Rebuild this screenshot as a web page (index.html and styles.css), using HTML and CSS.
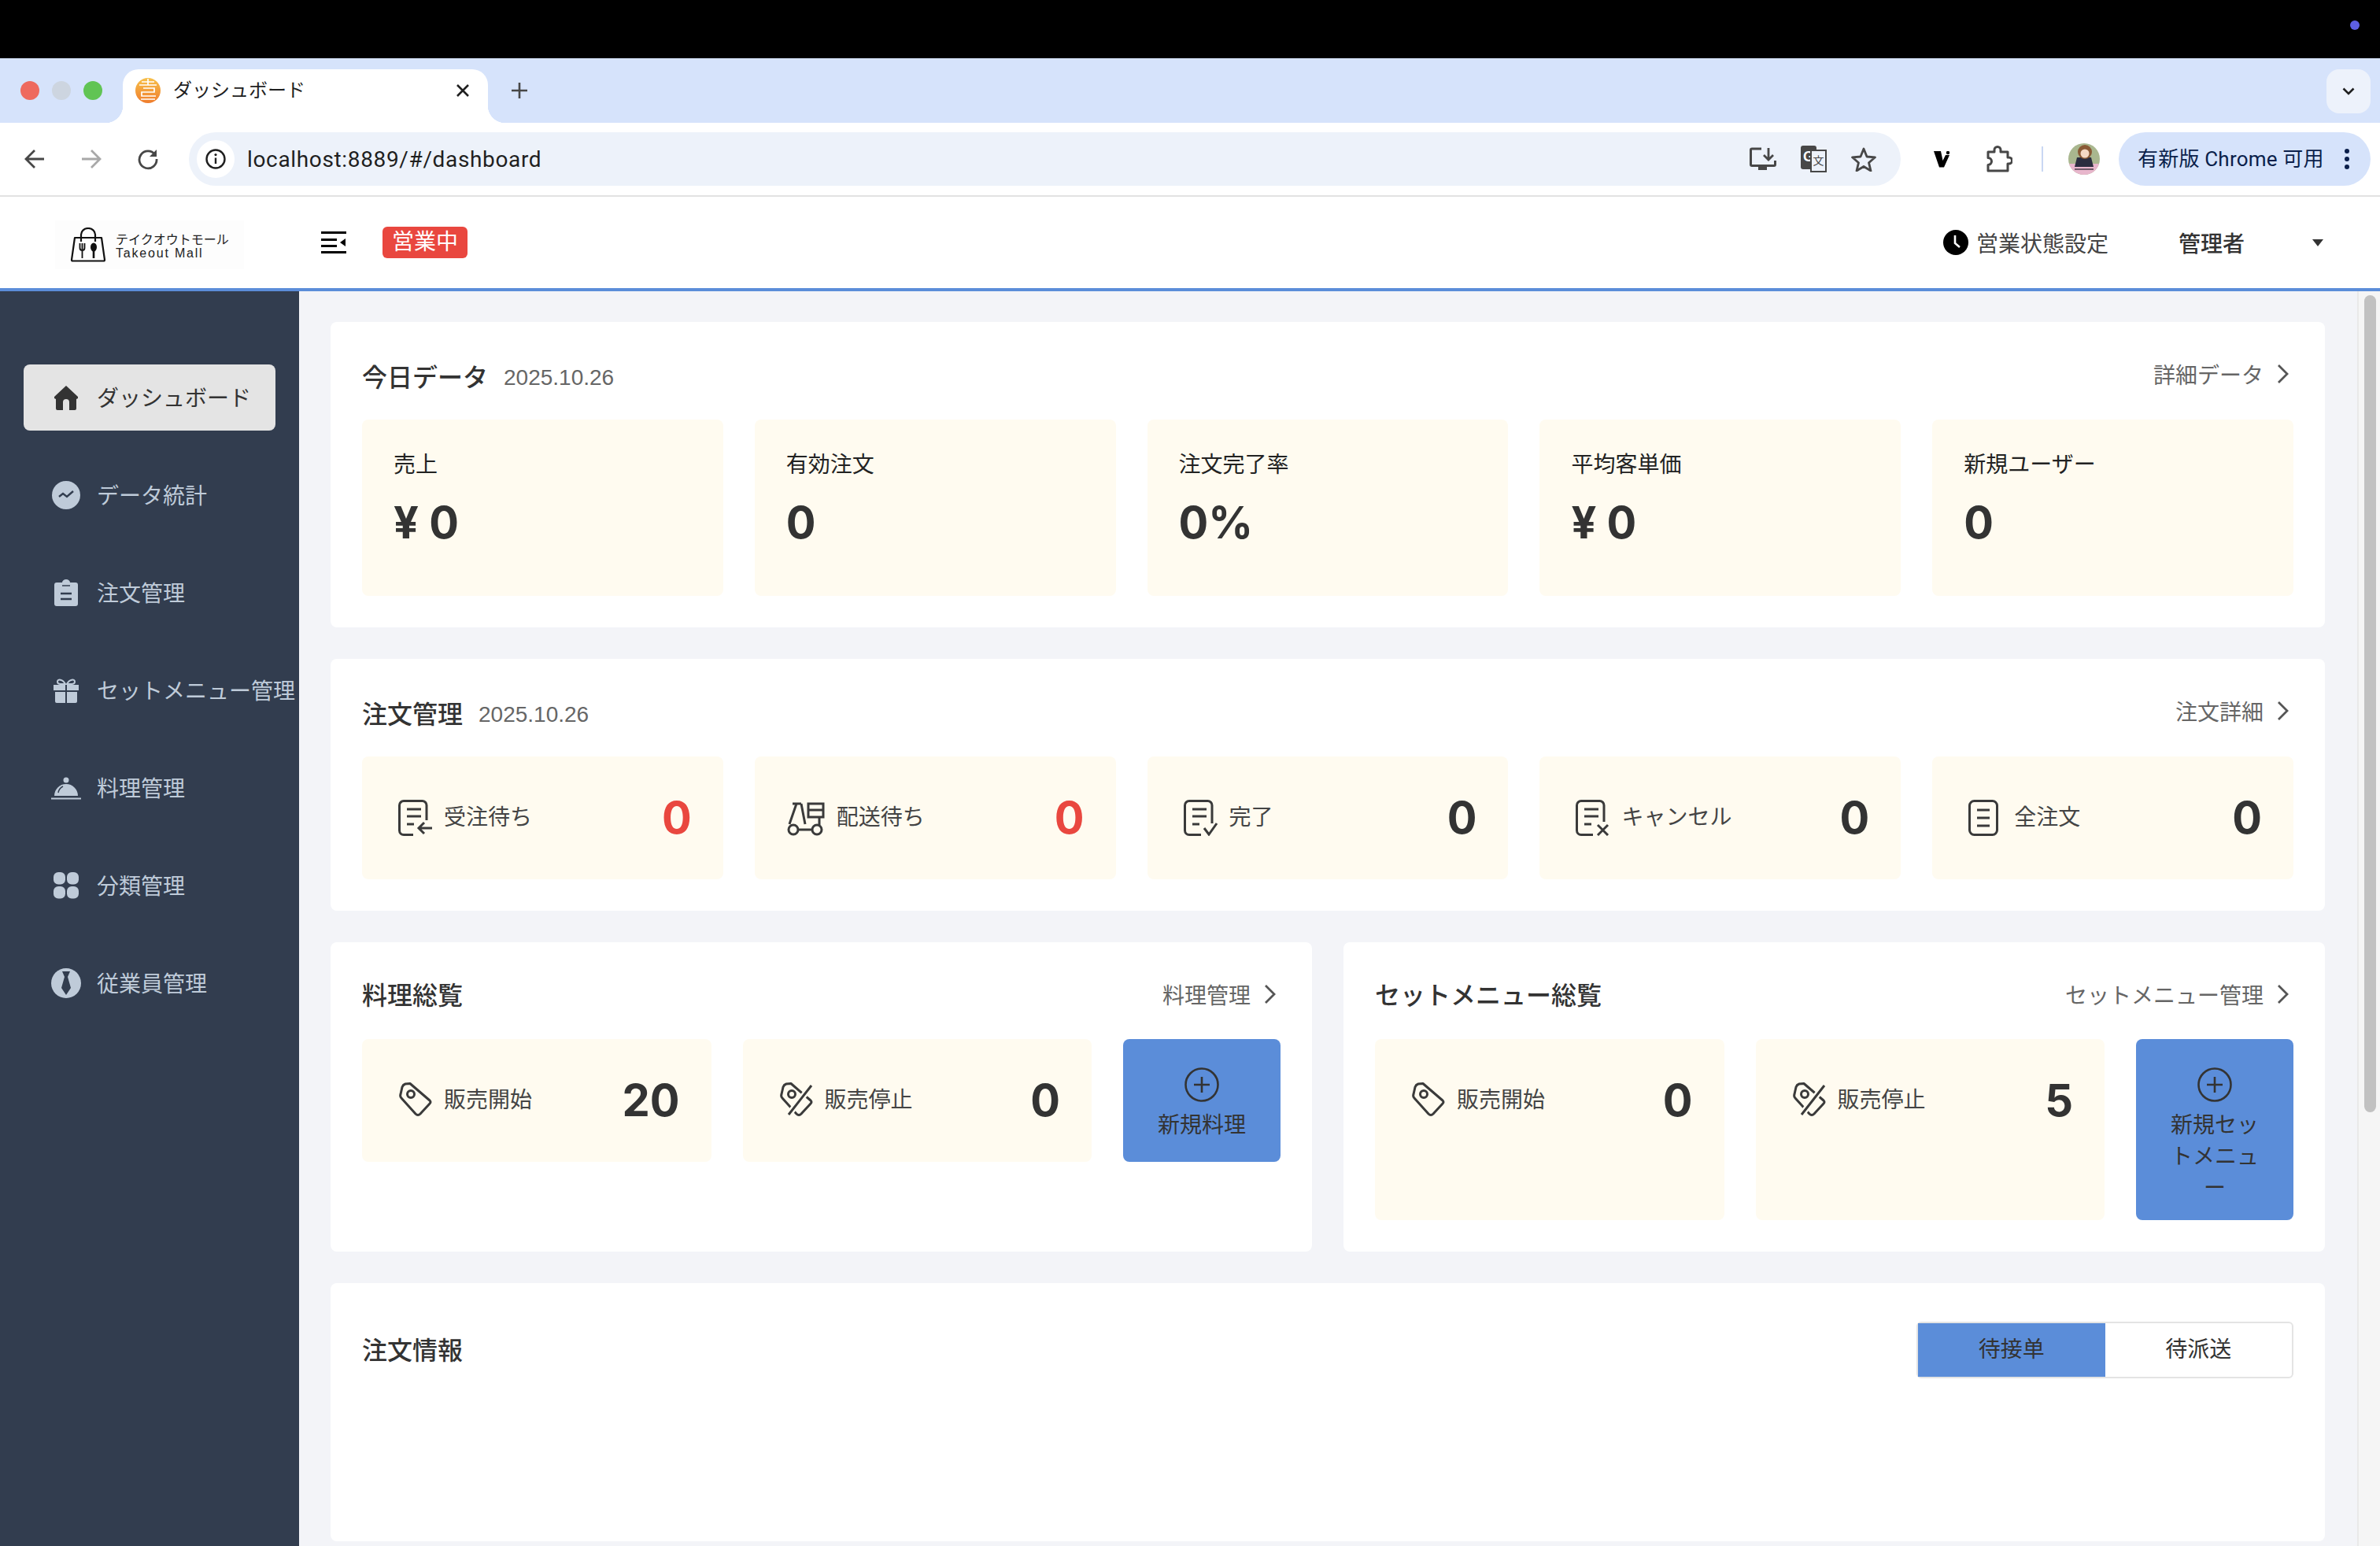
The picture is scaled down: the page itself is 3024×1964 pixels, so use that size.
FILE: index.html
```html
<!DOCTYPE html>
<html lang="ja">
<head>
<meta charset="utf-8">
<title>ダッシュボード</title>
<link rel="stylesheet" href="styles.css">
</head>
<body>

<!-- mac menu bar -->
<div class="menubar"><span class="menubar-dot"></span></div>

<!-- browser tabs -->
<div class="tabstrip">
  <div class="lights">
    <span class="light light-red"></span>
    <span class="light light-grey"></span>
    <span class="light light-green"></span>
  </div>
  <div class="tab">
    <svg class="favicon" width="32" height="32" viewBox="0 0 32 32">
      <defs><linearGradient id="fav" x1="0" y1="0" x2="0" y2="1"><stop offset="0" stop-color="#f7c04a"/><stop offset="1" stop-color="#ef7d2d"/></linearGradient></defs>
      <circle cx="16" cy="16" r="16" fill="url(#fav)"/>
      <path d="M8 5h16M5 9h22M16 1v8M10 13h14v5H8v5h18M7 27h18" fill="none" stroke="#fff" stroke-width="1.700"/>
    </svg>
    <span class="tab-title">ダッシュボード</span>
    <svg class="tab-close" width="16" height="16" viewBox="0 0 16 16"><path d="M1 1l14 14M15 1L1 15" stroke="#1f1f1f" stroke-width="2.6" fill="none"/></svg>
  </div>
  <svg class="tab-new" width="22" height="22" viewBox="0 0 22 22"><path d="M11 1v20M1 11h20" stroke="#474747" stroke-width="2.6" fill="none"/></svg>
  <div class="tab-menu">
    <svg width="16" height="10" viewBox="0 0 16 10"><path d="M1.5 1.5L8 8l6.5-6.5" stroke="#1f1f1f" stroke-width="2.6" fill="none"/></svg>
  </div>
</div>

<!-- browser toolbar -->
<div class="toolbar">
  <div class="nav-btn"><svg width="28" height="28" viewBox="0 0 28 28"><path d="M26 14H3M14 3L3 14l11 11" fill="none" stroke="#474747" stroke-width="2.8"/></svg></div>
  <div class="nav-btn"><svg width="28" height="28" viewBox="0 0 28 28"><path d="M2 14h23M14 3l11 11-11 11" fill="none" stroke="#a8a8a8" stroke-width="2.8"/></svg></div>
  <div class="nav-btn"><svg width="28" height="28" viewBox="0 0 28 28"><path d="M23 8.5A11 11 0 1 0 25 14" fill="none" stroke="#474747" stroke-width="2.8"/><path d="M25 2v9h-9z" fill="#474747"/></svg></div>

  <div class="omnibox">
    <div class="site-info">
      <svg width="26" height="26" viewBox="0 0 26 26"><circle cx="13" cy="13" r="11.5" fill="none" stroke="#1f1f1f" stroke-width="2.4"/><path d="M13 11.5V19" stroke="#1f1f1f" stroke-width="2.4"/><circle cx="13" cy="7.6" r="1.6" fill="#1f1f1f"/></svg>
    </div>
    <span class="url">localhost:8889/#/dashboard</span>
    <div class="omni-icons">
      <div class="omni-icon"><svg width="34" height="30" viewBox="0 0 34 30"><path d="M15 2H3a1.500 1.500 0 0 0-1.500 1.500V22A1.500 1.500 0 0 0 3 23.500h28a1.500 1.500 0 0 0 1.500-1.500V17" fill="none" stroke="#474747" stroke-width="3"/><path d="M11 24h11v5H11z" fill="#474747"/><path d="M24 1v14M18 10l6 6 6-6" fill="none" stroke="#474747" stroke-width="2.8"/></svg></div>
      <div class="omni-icon translate">
        <span class="translate-g">G</span>
        <span class="translate-x">文</span>
      </div>
      <div class="omni-icon"><svg width="34" height="32" viewBox="0 0 34 32"><path d="M17 3l4 10 10.500.8-8 6.900 2.500 10.300L17 25.500 8 31l2.500-10.300-8-6.900L13 13z" fill="none" stroke="#474747" stroke-width="2.8" stroke-linejoin="round"/></svg></div>
    </div>
  </div>

  <div class="ext-btn"><svg width="22" height="21" viewBox="0 0 22 21"><path d="M0 0h9l2.500 12L15 5h5l-7 15.500H7z" fill="#000"/><circle cx="18" cy="2" r="2.200" fill="#000"/></svg></div>
  <div class="ext-btn"><svg width="34" height="34" viewBox="0 0 34 34"><path d="M3 8h8V5.500a4 4 0 0 1 8 0V8h9v7h1.500a4 4 0 0 1 0 8H28v9H3v-7.500a4 4 0 0 0 0-9z" fill="none" stroke="#474747" stroke-width="3" stroke-linejoin="round"/></svg></div>
  <span class="tool-divider"></span>
  <svg class="avatar" width="40" height="40" viewBox="0 0 40 40">
    <defs><clipPath id="av"><circle cx="20" cy="20" r="20"/></clipPath></defs>
    <g clip-path="url(#av)">
      <rect width="40" height="40" fill="#a9b78f"/>
      <rect y="26" width="40" height="14" fill="#e8b6cc"/>
      <path d="M11 18h18l3 12H8z" fill="#2b2d3f"/>
      <circle cx="21" cy="11" r="9" fill="#8a5a36"/>
      <circle cx="21" cy="13" r="5.500" fill="#f4d8c4"/>
      <path d="M8 33h24" stroke="#4a3a48" stroke-width="1.500"/>
    </g>
  </svg>
  <div class="update-pill">
    <span class="update-text">有新版 Chrome 可用</span>
    <svg width="8" height="28" viewBox="0 0 8 28"><circle cx="4" cy="4" r="3" fill="#0b1f4b"/><circle cx="4" cy="14" r="3" fill="#0b1f4b"/><circle cx="4" cy="24" r="3" fill="#0b1f4b"/></svg>
  </div>
</div>

<!-- app header -->
<header class="app-header">
  <div class="logo">
    <svg width="46" height="44" viewBox="0 0 46 44">
      <path d="M6 13h34l4 28a1.500 1.500 0 0 1-1.500 1.500H3.500A1.500 1.500 0 0 1 2 41z" fill="none" stroke="#111" stroke-width="2.200" stroke-linejoin="round"/>
      <path d="M14 18V9a9 8 0 0 1 18 0v9" fill="none" stroke="#111" stroke-width="2.200"/>
      <path d="M12.500 20v6a3 3 0 0 0 6 0v-6M15.500 20v19" fill="none" stroke="#111" stroke-width="1.800"/>
      <ellipse cx="30" cy="25" rx="4" ry="5.500" fill="#111"/>
      <path d="M30 28v11" stroke="#111" stroke-width="2.600"/>
    </svg>
    <div class="logo-text">
      <span>テイクオウトモール</span>
      <span class="logo-en">Takeout Mall</span>
    </div>
  </div>
  <svg class="collapse" width="32" height="28" viewBox="0 0 32 28">
    <path d="M0 1.500h32M0 26.500h32M0 10.500h20M0 18.500h20" stroke="#000" stroke-width="3" fill="none"/>
    <path d="M31 9v10l-7-5z" fill="#000"/>
  </svg>
  <span class="status-badge">営業中</span>
  <div class="header-right">
    <svg width="32" height="32" viewBox="0 0 32 32"><circle cx="16" cy="16" r="16" fill="#000"/><path d="M15 7v10l6 5" fill="none" stroke="#fff" stroke-width="2.600"/></svg>
    <span class="status-set">営業状態設定</span>
    <span class="admin-name">管理者</span>
    <span class="admin-caret"></span>
  </div>
</header>

<div class="layout">
  <nav class="sidebar">
    <a class="side-item active">
      <span class="side-icon"><svg width="32" height="32" viewBox="0 0 32 32"><path d="M16 1L1 15v2l2 1v12a2 2 0 0 0 2 2h7V22a4 4 0 0 1 8 0v10h7a2 2 0 0 0 2-2V18l2-1v-2z" fill="#333"/></svg></span>
      <span class="side-label">ダッシュボード</span>
    </a>
    <a class="side-item">
      <span class="side-icon"><svg width="36" height="36" viewBox="0 0 36 36"><circle cx="18" cy="18" r="18" fill="#bfcbd9"/><path d="M9 20l5-4 5 4 8-7" fill="none" stroke="#323d4f" stroke-width="2.400"/></svg></span>
      <span class="side-label">データ統計</span>
    </a>
    <a class="side-item">
      <span class="side-icon"><svg width="30" height="34" viewBox="0 0 30 34"><path d="M3 4h7a5 4 0 0 1 10 0h7a3 3 0 0 1 3 3v24a3 3 0 0 1-3 3H3a3 3 0 0 1-3-3V7a3 3 0 0 1 3-3z" fill="#bfcbd9"/><path d="M8 18h14M8 25h14" stroke="#323d4f" stroke-width="2.400"/><path d="M10 8h10" stroke="#323d4f" stroke-width="1.500"/></svg></span>
      <span class="side-label">注文管理</span>
    </a>
    <a class="side-item">
      <span class="side-icon"><svg width="32" height="32" viewBox="0 0 32 32"><path d="M0 9h15v7H0zM17 9h15v7H17zM2 18h13v14H4a2 2 0 0 1-2-2zM17 18h13v12a2 2 0 0 1-2 2H17z" fill="#bfcbd9"/><path d="M15 8c-3-6-10-7-10-3s5 3 10 3zM17 8c3-6 10-7 10-3s-5 3-10 3z" fill="none" stroke="#bfcbd9" stroke-width="2"/></svg></span>
      <span class="side-label">セットメニュー管理</span>
    </a>
    <a class="side-item">
      <span class="side-icon"><svg width="38" height="30" viewBox="0 0 38 30"><path d="M4 25a15 15 0 0 1 30 0z" fill="#bfcbd9"/><circle cx="19" cy="5" r="3.500" fill="#bfcbd9"/><path d="M0 28.500h38" stroke="#bfcbd9" stroke-width="2"/><path d="M9 21a11 11 0 0 1 6-8" fill="none" stroke="#323d4f" stroke-width="1.500"/></svg></span>
      <span class="side-label">料理管理</span>
    </a>
    <a class="side-item">
      <span class="side-icon"><svg width="32" height="34" viewBox="0 0 32 34"><rect width="15" height="15.500" rx="6" fill="#bfcbd9"/><rect x="17" width="15" height="15.500" rx="6" fill="#bfcbd9"/><rect y="18" width="15" height="15.500" rx="6" fill="#bfcbd9"/><rect x="17" y="18" width="15" height="15.500" rx="6" fill="#bfcbd9"/></svg></span>
      <span class="side-label">分類管理</span>
    </a>
    <a class="side-item">
      <span class="side-icon"><svg width="38" height="38" viewBox="0 0 38 38"><circle cx="19" cy="19" r="19" fill="#bfcbd9"/><path d="M14 4h10l-3 7 4 14-6 9-6-9 4-14z" fill="#323d4f"/></svg></span>
      <span class="side-label">従業員管理</span>
    </a>
  </nav>

  <main class="content">
    <section class="card">
      <div class="card-head dated">
        <h2 class="card-title">今日データ</h2>
        <span class="card-date">2025.10.26</span>
        <a class="card-link">詳細データ
          <svg width="14" height="26" viewBox="0 0 14 26"><path d="M1 2l11 11L1 24" fill="none" stroke="#555" stroke-width="2.800"/></svg>
        </a>
      </div>
      <div class="stat-row">
        <div class="stat-box stacked"><span class="stat-name">売上</span><b class="stat-value">¥ 0</b></div>
        <div class="stat-box stacked"><span class="stat-name">有効注文</span><b class="stat-value">0</b></div>
        <div class="stat-box stacked"><span class="stat-name">注文完了率</span><b class="stat-value">0%</b></div>
        <div class="stat-box stacked"><span class="stat-name">平均客単価</span><b class="stat-value">¥ 0</b></div>
        <div class="stat-box stacked"><span class="stat-name">新規ユーザー</span><b class="stat-value">0</b></div>
      </div>
    </section>

    <section class="card">
      <div class="card-head dated">
        <h2 class="card-title">注文管理</h2>
        <span class="card-date">2025.10.26</span>
        <a class="card-link">注文詳細
          <svg width="14" height="26" viewBox="0 0 14 26"><path d="M1 2l11 11L1 24" fill="none" stroke="#555" stroke-width="2.800"/></svg>
        </a>
      </div>
      <div class="stat-row">
        <div class="stat-box">
          <svg class="stat-icon" width="50" height="46" viewBox="-6 0 50 46"><path d="M36 26V7a5.500 5.500 0 0 0-5.500-5.500H7A5.500 5.500 0 0 0 1.500 7v32A5.500 5.500 0 0 0 7 44.500h12M11 12h18M11 21h18M11 31h9M43 36H26M33 29l-7 7 7 7" fill="none" stroke="#3a3a3a" stroke-width="3"/></svg>
          <span class="stat-label">受注待ち</span><b class="stat-value red">0</b>
        </div>
        <div class="stat-box">
          <svg class="stat-icon" width="50" height="46" viewBox="0 0 50 46"><path d="M8 5h11M13 5L4 31M19 5l5 26M14 38h20M42 23v9" fill="none" stroke="#3a3a3a" stroke-width="3"/><path d="M28 5h19v8H28zM28 13h19v9H28z" fill="none" stroke="#3a3a3a" stroke-width="3"/><circle cx="9" cy="38" r="6" fill="none" stroke="#3a3a3a" stroke-width="3"/><circle cx="39" cy="38" r="6" fill="none" stroke="#3a3a3a" stroke-width="3"/></svg>
          <span class="stat-label">配送待ち</span><b class="stat-value red">0</b>
        </div>
        <div class="stat-box">
          <svg class="stat-icon" width="50" height="46" viewBox="-6 0 50 46"><path d="M36 30V7a5.500 5.500 0 0 0-5.500-5.500H7A5.500 5.500 0 0 0 1.500 7v32A5.500 5.500 0 0 0 7 44.500h15M11 12h18M11 21h18M11 31h9M26 36l6 8 10-14" fill="none" stroke="#3a3a3a" stroke-width="3"/></svg>
          <span class="stat-label">完了</span><b class="stat-value">0</b>
        </div>
        <div class="stat-box">
          <svg class="stat-icon" width="50" height="46" viewBox="-6 0 50 46"><path d="M36 28V7a5.500 5.500 0 0 0-5.500-5.500H7A5.500 5.500 0 0 0 1.500 7v32A5.500 5.500 0 0 0 7 44.500h15M11 12h18M11 21h18M11 31h9M28 32l13 13M41 32L28 45" fill="none" stroke="#3a3a3a" stroke-width="3"/></svg>
          <span class="stat-label">キャンセル</span><b class="stat-value">0</b>
        </div>
        <div class="stat-box">
          <svg class="stat-icon" width="50" height="46" viewBox="-6 0 50 46"><rect x="1.500" y="1.500" width="35" height="43" rx="6" fill="none" stroke="#3a3a3a" stroke-width="3"/><path d="M11 13h16M11 23h16M11 33h16" stroke="#3a3a3a" stroke-width="3"/></svg>
          <span class="stat-label">全注文</span><b class="stat-value">0</b>
        </div>
      </div>
    </section>

    <div class="card-pair">
      <section class="card">
        <div class="card-head">
          <h2 class="card-title">料理総覧</h2>
          <a class="card-link">料理管理
            <svg width="14" height="26" viewBox="0 0 14 26"><path d="M1 2l11 11L1 24" fill="none" stroke="#555" stroke-width="2.800"/></svg>
          </a>
        </div>
        <div class="stat-row">
          <div class="stat-box">
            <svg class="stat-icon" width="50" height="44" viewBox="-7 0 50 44"><path d="M14 1.500L39 23q2 2 0 4L27 40q-3 3-6 0L3 20q-2-2-1-5L4 6q1-3 4-4z" fill="none" stroke="#3a3a3a" stroke-width="3" stroke-linejoin="round"/><circle cx="15" cy="15" r="4.500" fill="none" stroke="#3a3a3a" stroke-width="3"/></svg>
            <span class="stat-label">販売開始</span><b class="stat-value">20</b>
          </div>
          <div class="stat-box">
            <svg class="stat-icon" width="50" height="44" viewBox="-7 0 50 44"><path d="M14 1.500L39 23q2 2 0 4L27 40q-3 3-6 0L3 20q-2-2-1-5L4 6q1-3 4-4z" fill="none" stroke="#3a3a3a" stroke-width="3" stroke-linejoin="round"/><circle cx="15" cy="15" r="4.500" fill="none" stroke="#3a3a3a" stroke-width="3"/><path d="M40 4L11 41" stroke="#fffbf0" stroke-width="8"/><path d="M40 4L11 41" stroke="#3a3a3a" stroke-width="3"/></svg>
            <span class="stat-label">販売停止</span><b class="stat-value">0</b>
          </div>
          <a class="add-btn">
            <svg width="44" height="44" viewBox="0 0 44 44"><circle cx="22" cy="22" r="20.500" fill="none" stroke="#333" stroke-width="2.600"/><path d="M22 12v20M12 22h20" stroke="#333" stroke-width="2.600"/></svg>
            <span class="add-label">新規料理</span>
          </a>
        </div>
      </section>

      <section class="card">
        <div class="card-head">
          <h2 class="card-title">セットメニュー総覧</h2>
          <a class="card-link">セットメニュー管理
            <svg width="14" height="26" viewBox="0 0 14 26"><path d="M1 2l11 11L1 24" fill="none" stroke="#555" stroke-width="2.800"/></svg>
          </a>
        </div>
        <div class="stat-row">
          <div class="stat-box">
            <svg class="stat-icon" width="50" height="44" viewBox="-7 0 50 44"><path d="M14 1.500L39 23q2 2 0 4L27 40q-3 3-6 0L3 20q-2-2-1-5L4 6q1-3 4-4z" fill="none" stroke="#3a3a3a" stroke-width="3" stroke-linejoin="round"/><circle cx="15" cy="15" r="4.500" fill="none" stroke="#3a3a3a" stroke-width="3"/></svg>
            <span class="stat-label">販売開始</span><b class="stat-value">0</b>
          </div>
          <div class="stat-box">
            <svg class="stat-icon" width="50" height="44" viewBox="-7 0 50 44"><path d="M14 1.500L39 23q2 2 0 4L27 40q-3 3-6 0L3 20q-2-2-1-5L4 6q1-3 4-4z" fill="none" stroke="#3a3a3a" stroke-width="3" stroke-linejoin="round"/><circle cx="15" cy="15" r="4.500" fill="none" stroke="#3a3a3a" stroke-width="3"/><path d="M40 4L11 41" stroke="#fffbf0" stroke-width="8"/><path d="M40 4L11 41" stroke="#3a3a3a" stroke-width="3"/></svg>
            <span class="stat-label">販売停止</span><b class="stat-value">5</b>
          </div>
          <a class="add-btn">
            <svg width="44" height="44" viewBox="0 0 44 44"><circle cx="22" cy="22" r="20.500" fill="none" stroke="#333" stroke-width="2.600"/><path d="M22 12v20M12 22h20" stroke="#333" stroke-width="2.600"/></svg>
            <span class="add-label">新規セットメニュー</span>
          </a>
        </div>
      </section>
    </div>

    <section class="card card-orders">
      <div class="orders-head">
        <h2 class="card-title">注文情報</h2>
        <div class="toggle">
          <span class="toggle-item on">待接单</span>
          <span class="toggle-item">待派送</span>
        </div>
      </div>
    </section>
  </main>

  <div class="scrollbar"><span class="scroll-thumb"></span></div>
</div>

</body>
</html>
```

FILE: styles.css
```css
html, body {margin: 0; height: 100%; overflow: hidden;}
body {display: flex; flex-direction: column; height: 1964px; font-family: "Liberation Sans", "Noto Sans CJK JP", sans-serif; font-size: 28px; color: #333; background: #fff;}
h2 {margin: 0;}
svg {display: block; flex: none;}

/* menu bar */
.menubar {height: 74px; background: #000; display: flex; justify-content: flex-end; flex: none;}
.menubar-dot {width: 12px; height: 12px; border-radius: 50%; background: #5d5fe3; margin: 26px 26px 0 0;}

/* tabs */
.tabstrip {height: 82px; background: #d6e3fb; display: flex; flex: none;}
.lights {width: 156px; display: flex; gap: 16px; padding: 29px 0 0 26px; box-sizing: border-box;}
.light {width: 24px; height: 24px; border-radius: 50%;}
.light-red {background: #ee6a5f;}
.light-grey {background: #cdd5e0;}
.light-green {background: #61c454;}
.tab {position: relative; width: 464px; height: 68px; margin-top: 14px; padding: 0 24px 14px 16px; box-sizing: border-box; background: #fff; border-radius: 20px 20px 0 0; display: flex; align-items: center; gap: 16px;}
.tab::before, .tab::after {content: ""; position: absolute; bottom: 0; width: 22px; height: 22px;}
.tab::before {left: -22px; background: radial-gradient(circle at 0 0, transparent 22px, #fff 22.500px);}
.tab::after {right: -22px; background: radial-gradient(circle at 100% 0, transparent 22px, #fff 22.500px);}
.tab-title {font-size: 24px; line-height: 28px; color: #1f1f1f; white-space: nowrap;}
.tab-close {margin-left: auto;}
.tab-new {margin: 30px 0 0 29px;}
.tab-menu {margin: 14px 12px 0 auto; width: 56px; height: 56px; border-radius: 16px; background: #edf2fb; display: flex; align-items: center; justify-content: center;}

/* toolbar */
.toolbar {height: 92px; box-sizing: border-box; padding: 12px 12px 0 8px; background: #fff; border-radius: 16px 16px 0 0; display: flex; flex: none;}
.nav-btn {width: 72px; height: 68px; display: flex; align-items: center; justify-content: center;}
.omnibox {flex: 1; height: 68px; margin-left: 16px; padding: 0 15px 0 10px; background: #edf2fa; border-radius: 34px; display: flex; align-items: center;}
.site-info {width: 48px; height: 48px; border-radius: 50%; background: #fff; display: flex; align-items: center; justify-content: center;}
.url {font-family: Roboto, sans-serif; font-size: 28px; letter-spacing: .65px; color: #1f1f1f; margin-left: 16px;}
.omni-icons {margin-left: auto; display: flex;}
.omni-icon {width: 64px; height: 68px; display: flex; align-items: center; justify-content: center;}
.translate {position: relative;}
.translate-g {width: 20px; height: 30px; background: #474747; color: #fff; font-size: 18px; font-weight: 700; line-height: 28px; text-align: center; border-radius: 3px; margin: -4px 0 0 -12px;}
.translate-x {position: absolute; left: 28px; top: 22px; width: 17px; height: 25px; border: 2px solid #474747; background: #edf2fa; font-size: 14px; line-height: 24px; text-align: center; color: #474747;}
.ext-btn {width: 72px; height: 68px; display: flex; align-items: center; justify-content: center;}
.omnibox + .ext-btn {margin-left: 17px;}
.tool-divider {width: 2px; height: 32px; margin: 18px 32px 0 18px; background: #c9d7f3;}
.avatar {margin: 14px 24px 0 0;}
.update-pill {width: 320px; height: 68px; box-sizing: border-box; padding: 0 26px 0 24px; background: #d6e3fb; border-radius: 34px; display: flex; align-items: center; justify-content: space-between;}
.update-text {font-family: Roboto, "Noto Sans CJK SC", sans-serif; font-size: 26px; letter-spacing: .2px; line-height: 30px; color: #0b1f4b; white-space: nowrap;}

/* app header */
.app-header {height: 120px; box-sizing: border-box; margin-top: 2px; padding: 0 72px 0 70px; border-bottom: 4px solid #5b8dd9; display: flex; align-items: center; background: #fff; flex: none; box-shadow: 0 -2px 0 #e2e2e2;}
.logo {width: 240px; height: 62px; box-sizing: border-box; padding-left: 19px; background: #fdfdfd; display: flex; align-items: center; gap: 12px; margin-top: 6px;}
.logo-text {display: flex; flex-direction: column; margin-top: 3px; font-size: 16px; line-height: 17px; color: #222; white-space: nowrap;}
.logo-en {letter-spacing: 1.800px;}
.collapse {margin-left: 98px;}
.status-badge {margin-left: 46px; width: 108px; height: 40px; border-radius: 6px; background: #e9473f; color: #fff; text-align: center; line-height: 40px;}
.header-right {margin-left: auto; display: flex; align-items: center;}
.status-set {margin-left: 10px; color: #444;}
.admin-name {margin-left: 89px; font-weight: 500; color: #333;}
.admin-caret {margin-left: 86px; border-left: 7px solid transparent; border-right: 7px solid transparent; border-top: 9px solid #333;}

/* sidebar */
.layout {flex: 1; display: flex; min-height: 0;}
.sidebar {width: 380px; flex: none; box-sizing: border-box; padding: 93px 0 0 30px; background: #323d4f; display: flex; flex-direction: column; gap: 40px;}
.side-item {width: 320px; height: 84px; box-sizing: border-box; padding-left: 34px; border-radius: 8px; display: flex; align-items: center; gap: 19px; color: #bfcbd9; white-space: nowrap;}
.side-item.active {background: #e4e4e4; color: #333;}
.side-icon {width: 40px; flex: none; display: flex; justify-content: center;}
.side-label {margin-top: -3px;}

/* main */
.content {flex: 1; min-width: 0; box-sizing: border-box; padding: 39px 41px 0 40px; background: #f3f4f8; display: flex; flex-direction: column; gap: 40px;}
.card {background: #fff; border-radius: 8px; padding: 40px; min-width: 0; box-sizing: border-box; flex: none;}
.card-pair .card {flex: 1 1 0;}
.card-head {height: 54px; margin-bottom: 29px; display: flex; align-items: center;}
.card-head.dated {height: 60px; margin-bottom: 24px;}
.card-title {font-size: 32px; font-weight: 500; margin-bottom: 4px; color: #333;}
.card-date {margin-left: 20px; margin-top: 2px; color: #666;}
.card-link {margin-left: auto; padding-right: 6px; margin-bottom: 3px; display: flex; align-items: center; gap: 18px; color: #666; white-space: nowrap;}
.dated .card-link {margin-bottom: 8px;}
.stat-row {display: flex; gap: 40px; align-items: stretch;}
.stat-box {flex: 1 1 0; min-width: 0; box-sizing: border-box; padding: 40px; background: #fffbf0; border-radius: 8px; display: flex; align-items: flex-start;}
.stat-box.stacked {flex-direction: column; height: 224px; padding-top: 39px;}
.stat-icon {margin-top: 15px; margin-right: 14px;}
.stat-label {margin-top: 19px; line-height: 38px; color: #444; white-space: nowrap;}
.stat-name {color: #222; line-height: 38px;}
.stat-value {font-family: Inter, "Liberation Sans", sans-serif; font-size: 56px; font-weight: 700; color: #333; line-height: 76px; margin-left: auto;}
.stacked .stat-value {margin: 16px 0 0;}
.stat-value.red {color: #e9473f;}
.card-pair {display: flex; gap: 40px;}
.add-btn {width: 200px; flex: none; box-sizing: border-box; padding: 36px 40px 20px; background: #5b8dd9; border-radius: 8px; display: flex; flex-direction: column; align-items: center; gap: 10px;}
.add-label {line-height: 40px; text-align: center; word-break: break-all; color: #333;}
.card-orders {height: 328px;}
.orders-head {margin-top: 9px; display: flex; align-items: center; justify-content: space-between;}
.toggle {display: flex; width: 479px; height: 72px; box-sizing: border-box; border: 2px solid #e4e4e4; border-radius: 6px;}
.toggle-item {flex: 1; line-height: 68px; text-align: center; color: #333; font-family: "Liberation Sans", "Noto Sans CJK SC", sans-serif;}
.toggle-item.on {background: #5b8dd9;}

/* scrollbar */
.scrollbar {width: 29px; flex: none; box-sizing: border-box; border-left: 2px solid #e9e9e9; background: #f5f5f5; padding: 5px 5px 0 7px;}
.scroll-thumb {display: block; height: 1038px; border-radius: 8px; background: #c1c1c1;}
```
